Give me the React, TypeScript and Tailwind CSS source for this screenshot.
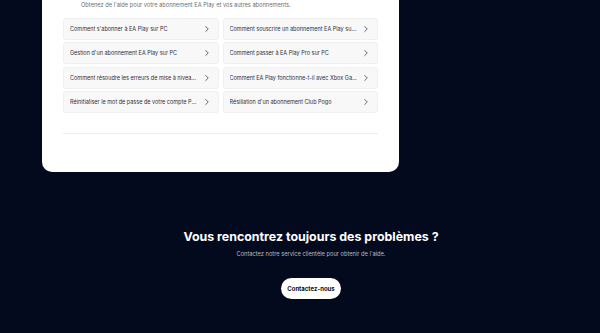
import { ChevronRight } from "lucide-react";

const articles = [
  "Comment s'abonner à EA Play sur PC",
  "Comment souscrire un abonnement EA Play sur Steam",
  "Gestion d'un abonnement EA Play sur PC",
  "Comment passer à EA Play Pro sur PC",
  "Comment résoudre les erreurs de mise à niveau EA Play",
  "Comment EA Play fonctionne-t-il avec Xbox Game Pass",
  "Réinitialiser le mot de passe de votre compte Pogo",
  "Résiliation d'un abonnement Club Pogo",
];

const ArticleLink = ({ title }: { title: string }) => (
  <a
    href="#"
    className="flex h-[22px] items-center gap-[3px] rounded-[3px] border border-[#f0f0f2] bg-[#f8f8f9] pl-[6px] pr-[6px] text-[#2b2f38]"
  >
    <span className="min-w-0 flex-1 truncate text-[5.5px] leading-[10px]">{title}</span>
    <ChevronRight className="h-[10px] w-[10px] shrink-0 text-[#2f323a]" strokeWidth={1.8} />
  </a>
);

export default function App() {
  return (
    <div
      className="flex h-[333px] w-full flex-col overflow-hidden bg-[#030a1d]"
      style={{ fontFamily: "Inter, 'Noto Sans', sans-serif" }}
    >
      {/* help panel, top cut off by the viewport */}
      <section className="ml-[42px] w-[357px] rounded-b-[10px] bg-white px-[21px] pb-[38px]">
        <p className="pl-[18px] text-[5.7px] leading-[10px] text-[#6b6f78]">
          Obtenez de l'aide pour votre abonnement EA Play et vos autres abonnements.
        </p>
        <div className="mt-[8px] grid grid-cols-2 gap-x-[4px] gap-y-[2.4px]">
          {articles.map((a) => (
            <ArticleLink key={a} title={a} />
          ))}
        </div>
        <div className="mt-[20px] h-px bg-[#ececee]" />
      </section>

      {/* contact block */}
      <div className="ml-[22px] mt-[56px] flex flex-col items-center">
        <h2 className="text-[12.4px] font-bold leading-[18px] text-white">
          Vous rencontrez toujours des problèmes ?
        </h2>
        <p className="mt-[3px] text-[5.7px] leading-[10px] text-[#b7bac4]">
          Contactez notre service clientèle pour obtenir de l'aide.
        </p>
        <button className="mt-[19px] h-[21px] rounded-full bg-white px-[6.5px] text-[6px] font-bold text-[#0b0d12]">
          Contactez-nous
        </button>
      </div>
    </div>
  );
}
